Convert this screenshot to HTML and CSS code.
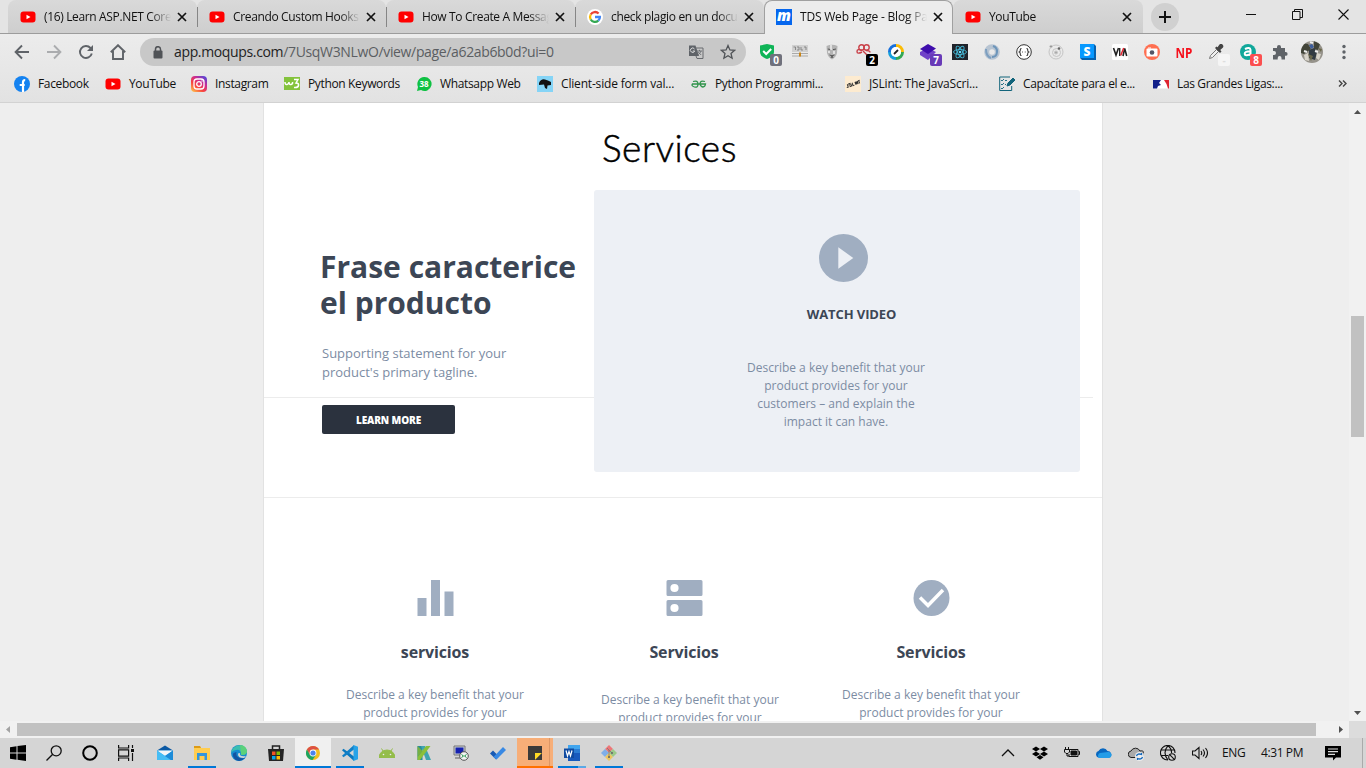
FILE: index.html
```html
<!DOCTYPE html>
<html lang="es">
<head>
<meta charset="utf-8">
<title>TDS Web Page - Blog Page</title>
<link rel="stylesheet" href="styles.css">
</head>
<body>
<svg class="defs" width="0" height="0">
  <symbol id="yt" viewBox="0 0 16 16"><rect x=".5" y="2.5" width="15" height="11" rx="3" fill="#f00"/><path d="M6.5 5.7v4.6L10.5 8z" fill="#fff"/></symbol>
  <symbol id="x" viewBox="0 0 10 10"><path d="M1 1l8 8M9 1L1 9" stroke="#111" stroke-width="1.7" fill="none"/></symbol>
</svg>

<div class="tabs">
  <div class="tab"><svg class="i16"><use href="#yt"/></svg><span class="tab-text">(16) Learn ASP.NET Core MVC</span><svg class="close"><use href="#x"/></svg></div>
  <div class="tab"><svg class="i16"><use href="#yt"/></svg><span class="tab-text">Creando Custom Hooks en</span><svg class="close"><use href="#x"/></svg></div>
  <div class="tab"><svg class="i16"><use href="#yt"/></svg><span class="tab-text">How To Create A Message</span><svg class="close"><use href="#x"/></svg></div>
  <div class="tab before"><svg class="i16" viewBox="0 0 16 16"><circle cx="8" cy="8" r="8" fill="#fff"/><g fill="none" stroke-width="2.3"><path d="M11.6 4.5A5 5 0 0 0 3.7 5.5" stroke="#ea4335"/><path d="M3.7 5.5a5 5 0 0 0 0 5" stroke="#fbbc05"/><path d="M3.7 10.5a5 5 0 0 0 7.6 1.2" stroke="#34a853"/><path d="M11.3 11.7A5 5 0 0 0 12.9 8H8" stroke="#4285f4"/></g></svg><span class="tab-text">check plagio en un documento</span><svg class="close"><use href="#x"/></svg></div>
  <div class="tab active"><svg class="i16" viewBox="0 0 16 16"><rect width="16" height="16" fill="#0667ee"/><text x="8" y="12" class="moq">m</text></svg><span class="tab-text">TDS Web Page - Blog Page</span><svg class="close"><use href="#x"/></svg></div>
  <div class="tab last"><svg class="i16"><use href="#yt"/></svg><span class="tab-text">YouTube</span><svg class="close"><use href="#x"/></svg></div>
  <div class="newtab"><svg width="12" height="12" viewBox="0 0 12 12"><path d="M6 0v12M0 6h12" stroke="#111" stroke-width="2"/></svg></div>
  <div class="win">
    <svg width="11" height="11" viewBox="0 0 11 11"><path d="M0 5.500h10" stroke="#111"/></svg>
    <svg width="11" height="11" viewBox="0 0 11 11"><path d="M.5 2.500h7.500v8H.5zM2.500 2.500v-2h8v8H8" stroke="#111" fill="none"/></svg>
    <svg width="11" height="11" viewBox="0 0 11 11"><path d="M.5.5l10 10M10.500.5l-10 10" stroke="#111" stroke-width="1.100"/></svg>
  </div>
</div>

<div class="toolbar">
  <div class="nav">
    <svg viewBox="0 0 16 16"><path d="M15 8H2M8 1.500L1.600 8 8 14.500" class="ns"/></svg>
    <svg viewBox="0 0 16 16" class="dim"><path d="M1 8h13M8 1.500L14.400 8 8 14.500" class="ns"/></svg>
    <svg viewBox="0 0 16 16"><path d="M13.800 9.500A6 6 0 1 1 12.500 4l1.500 2" class="ns"/><path d="M15 1v6H9z" fill="#5f6368"/></svg>
    <svg viewBox="0 0 16 16"><path d="M.8 8.200L8 1.200l7.200 7M3 7v8h10V7" class="ns"/></svg>
  </div>
  <div class="omni">
    <svg class="lock" viewBox="0 0 10 13"><rect x="0.500" y="4.500" width="9" height="8" rx="1" fill="#505357"/><path d="M2.500 5V3.200a2.500 2.500 0 0 1 5 0V5" fill="none" stroke="#505357" stroke-width="1.500"/></svg>
    <span class="url"><b>app.moqups.com</b>/7UsqW3NLwO/view/page/a62ab6b0d?ui=0</span>
    <svg class="i16" viewBox="0 0 16 16"><path d="M1 1.500h6.500L11 12H1z" fill="#5f6368"/><path d="M7.500 4H15v10.500H9L8 12" fill="none" stroke="#686b6f"/><path d="M6.500 5A2.200 2.200 0 1 0 6.700 7H4.800" stroke="#ddd" fill="none"/><path d="M9 7h5M11.500 5.800V7M13 7c-.5 2-2 3-2.800 3.600M10.200 8l3 3" stroke="#686b6f" fill="none" stroke-width=".9"/></svg>
    <svg class="i16 star" viewBox="0 0 16 16"><path d="M8 1.500l1.900 4.400 4.700.4-3.600 3.200 1.100 4.700L8 11.700l-4.100 2.500L5 9.500 1.400 6.300l4.700-.4z" fill="none" stroke="#505357" stroke-width="1.300"/></svg>
  </div>
  <div class="ext"><svg viewBox="0 0 16 16"><path d="M7 0l7 1.500v6c0 4-3 6-7 7.500C3 13.500 0 11.500 0 7.500v-6z" fill="#0fb457"/><path d="M3.200 7l3 3 5-5" fill="none" stroke="#fff" stroke-width="2"/></svg><i class="badge gray">0</i></div>
  <div class="ext"><svg viewBox="0 0 16 16"><rect y="1" width="16" height="7" fill="#d0d0d0"/><path d="M1.500 3h2v3M5 3h2v3H5M9 3v3h2M12 3h2v3" stroke="#777" fill="none" stroke-width=".8"/><path d="M0 9.500h16M0 12h16" stroke="#aaa"/><rect x="7" y="8.500" width="2" height="4" fill="#ca8618"/></svg></div>
  <div class="ext"><svg viewBox="0 0 16 16"><path d="M2.500 2Q8-.5 13.500 2L13 9q-1 4-5 6.500Q4 13 3 9z" fill="#b4b4b4"/><path d="M3.800 5l3 .6M9 5.600l3-.6M5.500 11q2.500 1.500 5 0M7 14l1-2 1 2" stroke="#555" fill="none"/><path d="M7 1v5M10 7v3M5 7v2" stroke="#eee" stroke-width="1.500"/></svg></div>
  <div class="ext"><svg viewBox="0 0 16 16" fill="none" stroke="#c94048" stroke-width="1.400"><circle cx="5.500" cy="3.500" r="2.700"/><circle cx="10.500" cy="3.500" r="2.700"/><path d="M6 6.200Q1 4.500 1 7.500t5 .5M7 7l6 6M10 6.500q4 0 4 2"/></svg><i class="badge black">2</i></div>
  <div class="ext"><svg viewBox="0 0 16 16" fill="none" stroke-width="3"><path d="M8 1.500A6.500 6.500 0 0 1 14.500 8" stroke="#fbbc05"/><path d="M14.500 8A6.500 6.500 0 0 1 8 14.500" stroke="#34a853"/><path d="M8 14.500A6.500 6.500 0 0 1 1.500 8" stroke="#169fdb"/><path d="M1.500 8A6.500 6.500 0 0 1 8 1.500" stroke="#1870dc"/><circle cx="8" cy="8" r="5" fill="#fff" stroke="none"/><path d="M6 10l4-4" stroke="#222" stroke-width="1.800"/></svg></div>
  <div class="ext"><svg viewBox="0 0 16 16"><path d="M8 4l8 4-8 8-8-5V8z" fill="#7042c8"/><path d="M8 0l8 4.500L8 10 0 5z" fill="#3e0dac"/></svg><i class="badge purple">7</i></div>
  <div class="ext"><svg viewBox="0 0 16 16"><rect width="16" height="16" fill="#20232a"/><g fill="none" stroke="#45b8d6" stroke-width=".9"><ellipse cx="8" cy="8" rx="6.500" ry="2.500"/><ellipse cx="8" cy="8" rx="6.500" ry="2.500" transform="rotate(60 8 8)"/><ellipse cx="8" cy="8" rx="6.500" ry="2.500" transform="rotate(120 8 8)"/></g><circle cx="8" cy="8" r="1.300" fill="#61dafb"/></svg></div>
  <div class="ext"><svg viewBox="0 0 16 16" fill="none"><circle cx="8" cy="8" r="5.300" stroke="#b7c4d2" stroke-width="5"/><path d="M9 2c6 2 5 11-1 11" stroke="#6d95ba" stroke-width="2"/><path d="M2 5c0 5 2 8 5 9" stroke="#7d9fc0" stroke-width="2"/></svg></div>
  <div class="ext"><svg viewBox="0 0 16 16" fill="none" stroke="#333"><circle cx="8" cy="8" r="7.300" fill="#fff"/><path d="M5.500 4.500q-1.300 0-1.200 1.500t-1 2q1.100.5 1 2t1.200 1.500M10.500 4.500q1.300 0 1.200 1.500t1 2q-1.100.5-1 2t-1.200 1.500M6.200 8h.8M8.800 8h.8" stroke-width="1.100"/></svg></div>
  <div class="ext"><svg viewBox="0 0 16 16" fill="none" stroke="#c5c5c5"><circle cx="8" cy="8" r="7"/><circle cx="8.500" cy="8.500" r="4"/><circle cx="8" cy="8.500" r="1.500" fill="#aaa"/><circle cx="3" cy="2.500" r="1.200" fill="#888"/><circle cx="11" cy="4.500" r="1.300" fill="#666" stroke="none"/></svg></div>
  <div class="ext"><svg viewBox="0 0 16 16"><path d="M0 0h14l2 2v14H2l-2-2z" fill="#0861ad"/><path d="M0 0h14v14H0z" fill="#0899ff"/><text x="7" y="11.500" class="s">S</text></svg></div>
  <div class="ext"><svg viewBox="0 0 16 16"><rect width="16" height="16" rx="1.500" fill="#fff"/><path d="M1.500 4L4 11 6.500 4M11 12l1.700-7.500L14.700 12" fill="none" stroke="#222" stroke-width="1.600"/><path d="M7.700 4v8" stroke="#222" stroke-width="1.400"/><path d="M8.700 11.500L11.700 4" stroke="#e2232e" stroke-width="1.500"/></svg></div>
  <div class="ext"><svg viewBox="0 0 16 16"><circle cx="8" cy="8" r="8" fill="#ff6f51"/><rect x="2.500" y="4.500" width="11" height="8" rx="1" fill="#fff"/><path d="M4 3.500h3v1H4z" fill="#fff"/><circle cx="8" cy="8.500" r="2.300" fill="#556"/></svg></div>
  <div class="ext np">NP</div>
  <div class="ext"><svg viewBox="0 0 16 16"><path d="M1.500 14.500l1-3 6-6 2 2-6 6z" fill="#eee" stroke="#777"/><path d="M7 4l5 5 1.500-1.500L12.200 6 15 3.500q1-1.500-.5-3t-3 0L9.500 3.300 8.400 2.500z" fill="#444"/></svg><i class="badge white">-</i></div>
  <div class="ext"><svg viewBox="0 0 16 16"><circle cx="8" cy="8" r="8" fill="#10a79a"/><path d="M5 5q5-2.500 5.500.8V12M10.500 7.300q-6 0-5.800 2.600t5.800.2" fill="none" stroke="#fff" stroke-width="2"/></svg><i class="badge red">8</i></div>
  <div class="ext"><svg viewBox="0 0 16 16"><path d="M1 4h4V3a2 2 0 0 1 4 0v1h4v4h.7a1.900 1.900 0 0 1 0 3.800H13v3.700H9.500V14a1.900 1.900 0 0 0-3.800 0v1.500H1V11h1a2 2 0 0 0 0-4H1z" fill="#5f6368"/></svg></div>
  <div class="ext"><svg class="avatar" viewBox="0 0 22 22"><clipPath id="av"><circle cx="11" cy="11" r="11"/></clipPath><g clip-path="url(#av)"><path d="M0 0h22v22H0z" fill="#96938b"/><path d="M0 2l7 1 3 5-7 5-3-1zM13 0l6 3-2 6-4-1z" fill="#414438"/><path d="M8 9l5-2 3 4-2 8-6-2z" fill="#323b42"/><path d="M8 4l3-1 2 3-3 2z" fill="#3c5d9b"/><path d="M3 14l4-2 1 8-4-1zM16 12l4 1-2 6-3-2z" fill="#d8d4ca"/><path d="M7 13l5 2-2 5zM17 7l4 1-1 3z" fill="#69664a"/><path d="M9 1l3 1M3 10l3 1M14 10l3 1" stroke="#eee" stroke-width="2"/></g></svg></div>
  <div class="ext"><svg viewBox="0 0 16 16" fill="#5f6368"><circle cx="8" cy="2.500" r="1.700"/><circle cx="8" cy="8" r="1.700"/><circle cx="8" cy="13.500" r="1.700"/></svg></div>
</div>

<div class="marks">
  <div class="mark"><svg class="i16" viewBox="0 0 16 16"><circle cx="8" cy="8" r="8" fill="#1482f0"/><path d="M9 16V6.200Q9 4 11.200 4.200M5.700 9h5" stroke="#fff" stroke-width="2.200" fill="none"/></svg>Facebook</div>
  <div class="mark"><svg class="i16"><use href="#yt"/></svg>YouTube</div>
  <div class="mark"><svg class="i16" viewBox="0 0 16 16"><defs><linearGradient id="ig" x1="0" y1="1" x2=".8" y2="0"><stop offset="0" stop-color="#ffd34e"/><stop offset=".4" stop-color="#f8433f"/><stop offset=".7" stop-color="#cc2b91"/><stop offset="1" stop-color="#5a45d4"/></linearGradient></defs><rect width="16" height="16" rx="4" fill="url(#ig)"/><rect x="3" y="3" width="10" height="10" rx="3" fill="none" stroke="#fff" stroke-width="1.300"/><circle cx="8" cy="8" r="2.300" fill="none" stroke="#fff" stroke-width="1.300"/><circle cx="11" cy="5" r=".7" fill="#fff"/></svg>Instagram</div>
  <div class="mark"><svg class="i16" viewBox="0 0 16 16"><path d="M0 1h16v13H0z" fill="#84c33c"/><path d="M1 6q0 3 2 2.500T5 6q0 3 2 2.500T8.500 6M10 3.500h4L12 7q3 0 2.500 2.500T10 11.500" fill="none" stroke="#fff" stroke-width="1.500"/></svg>Python Keywords</div>
  <div class="mark"><svg class="i16" viewBox="0 0 16 16"><path d="M8 1a7 7 0 1 1-3 13L1 15l1-4A7 7 0 0 1 8 1" fill="#0fc143"/><text x="8" y="11" class="wa">38</text></svg>Whatsapp Web</div>
  <div class="mark wide"><svg class="i16" viewBox="0 0 16 16"><path d="M0 0h16v16H0z" fill="#85d4f6"/><path d="M2 7Q4 2.500 8 3.500t6 2.500v3l-3.500.5L10 13l-2-1-1-3.500-5 .5z" fill="#111"/></svg>Client-side form val...</div>
  <div class="mark"><svg class="i16" viewBox="0 0 16 16"><path d="M2 5.500Q7 4 7 8t-3.500 3T1.500 8h13Q14 11 12 11T9 8q0-4 5-2.500" fill="none" stroke="#30944b" stroke-width="1.300"/></svg>Python Programmi...</div>
  <div class="mark wide"><svg class="i16" viewBox="0 0 16 16"><path d="M0 0h16v16H0z" fill="#fdebd0"/><g transform="rotate(-18 8 8)" stroke="#333" fill="none" stroke-width="1"><path d="M1 9.500h1.500V6.500M6 6.500H4V8h2v1.500H4M7.500 6.500v3H9M10.500 6.500v3M11.500 9.500v-3l1.500 3v-3M13.500 6.500h2M14.500 6.500v3"/></g></svg>JSLint: The JavaScri...</div>
  <div class="mark"><svg class="i16" viewBox="0 0 16 16" fill="none" stroke="#12647b"><path d="M11 1H.7v13.500h12V10"/><path d="M2 4l1 1 2-2M2 8l1 1 2-2M2 12l1 1 2-2M6 4.500h2M6 8.500h1" stroke-width=".9"/><path d="M8 10l1-3 5-5 2 2-5 5z" fill="#12647b"/></svg>Capacítate para el e...</div>
  <div class="mark"><svg class="i16" viewBox="0 0 16 16"><path d="M0 4h16v8.500H0z" fill="#fff"/><path d="M0 4h8L6 7l2 2-3 1-1 2.500H0z" fill="#12208a"/><path d="M11 4h5v8.500h-1L13.500 8z" fill="#df2330"/></svg>Las Grandes Ligas:...</div>
  <svg class="more" width="9" height="7" viewBox="0 0 9 7"><path d="M1 .5l3 3-3 3M5 .5l3 3-3 3" fill="none" stroke="#444" stroke-width="1.400"/></svg>
</div>

<div class="view">
  <div class="canvas">
    <div class="page">
      <section class="hero">
        <h1>Services</h1>
        <div class="pitch">
          <h2>Frase caracterice<br>el producto</h2>
          <p>Supporting statement for your<br>product's primary tagline.</p>
          <a class="btn">LEARN MORE</a>
        </div>
        <div class="video">
          <svg width="49" height="48" viewBox="0 0 49 48" preserveAspectRatio="none"><ellipse cx="24.500" cy="24" rx="24.500" ry="24" fill="#a0aec1"/><path d="M19.300 13.300v21.500L34.300 24z" fill="#edf0f5"/></svg>
          <h3>WATCH VIDEO</h3>
          <p>Describe a key benefit that your<br>product provides for your<br>customers – and explain the<br>impact it can have.</p>
        </div>
      </section>
      <section class="features">
        <div class="feature"><svg viewBox="0 0 36 36"><path d="M0 18h9v18H0zM13.500 0h9v36h-9zM27 11.500h9V36h-9z" fill="#a0aec1"/></svg><h4>servicios</h4><p>Describe a key benefit that your<br>product provides for your</p></div>
        <div class="feature mid"><svg viewBox="0 0 36 36"><path d="M1.500 0h33q1.500 0 1.500 1.500v13q0 1.500-1.500 1.500h-33Q0 16 0 14.500v-13Q0 0 1.500 0zM1.500 20h33q1.500 0 1.500 1.500v13q0 1.500-1.500 1.500h-33Q0 36 0 34.500v-13Q0 20 1.500 20z" fill="#a0aec1"/><circle cx="8" cy="8" r="4.100" fill="#fff"/><circle cx="8" cy="28" r="4.100" fill="#fff"/></svg><h4>Servicios</h4><p>Describe a key benefit that your<br>product provides for your</p></div>
        <div class="feature"><svg viewBox="0 0 36 36"><circle cx="18" cy="18" r="18" fill="#a0aec1"/><path d="M6.500 17.500l8 8L29.500 10" fill="none" stroke="#fff" stroke-width="3.500"/></svg><h4>Servicios</h4><p>Describe a key benefit that your<br>product provides for your</p></div>
      </section>
    </div>
  </div>
  <div class="vbar"><svg width="7" height="4"><path d="M0 4l3.500-4L7 4z" fill="#505050"/></svg><div class="vthumb"></div><svg width="7" height="4"><path d="M0 0l3.500 4L7 0z" fill="#505050"/></svg></div>
</div>
<div class="hbar"><svg width="4" height="7"><path d="M4 0L0 3.500 4 7z" fill="#a3a3a3"/></svg><div class="hthumb"></div><svg width="4" height="7"><path d="M0 0l4 3.500L0 7z" fill="#505050"/></svg></div>

<div class="taskbar">
  <div class="sys"><svg viewBox="0 0 16 16"><path d="M0 2.300L6.500 1.300v6.200H0zM7.500 1.100L16 0v7.500H7.500zM0 8.500h6.500v6.200L0 13.700zM7.500 8.500H16V16l-8.500-1.200z"/></svg></div>
  <div class="sys"><svg viewBox="0 0 16 16" fill="none" stroke="#111" stroke-width="1.300"><circle cx="10.200" cy="5.800" r="5"/><path d="M6.700 9.300L.5 15.500"/></svg></div>
  <div class="sys"><svg viewBox="0 0 16 16"><circle cx="8" cy="8" r="6.800" fill="none" stroke="#000" stroke-width="2"/></svg></div>
  <div class="sys"><svg viewBox="0 0 16 16" fill="none" stroke="#111" stroke-width="1.200"><path d="M.6 0v3h10V0M.6 4.800h10v6.400H.6zM.6 16v-3h10v3M14.500 0v3M14.500 8v8"/><path d="M13 4h3v3h-3z" fill="#111" stroke="none"/></svg></div>
  <div class="apps">
    <div class="app"><svg viewBox="0 0 16 16"><path d="M0 5.500L8 .5l8 5v9.500H0z" fill="#0c59a4"/><path d="M0 5.500h16V15H0z" fill="#2aa8ed"/><path d="M0 5.500h16L8 11z" fill="#f4f6f8"/><path d="M0 5.500L14 15H0z" fill="#45bdf5"/><path d="M16 5.500V15h-2L8 11z" fill="#1c8bd8"/></svg></div>
    <div class="app run"><svg viewBox="0 0 16 16"><path d="M0 1h6l1 2h9v12H0z" fill="#ffcd50"/><path d="M0 1h6l1 2H0z" fill="#dc9a16"/><path d="M3 15V8h10v7h-2.500v-4h-5v4z" fill="#3295db"/></svg></div>
    <div class="app"><svg viewBox="0 0 16 16"><circle cx="8" cy="8" r="8" fill="#168bd0"/><path d="M1 5C4-1 14-2 16 6q0 4-5 4-2-.5-1-2Q9 4 5 5 2 5 0 8z" fill="#3bbfb0"/><path d="M9 .2Q15 0 16 6q0 4-5 4-1.500-.5-1-2z" fill="#5bd17a"/><path d="M5.500 7Q4 14 14 13q-5 5-10 1.500Q-1 8 5.500 7" fill="#1354a3"/><path d="M9 8q-1 4 6 3l-2 2Q6.500 13 7 8.500z" fill="#d5d5d5"/></svg></div>
    <div class="app"><svg viewBox="0 0 16 16"><path d="M4.500 4V1h7v3" fill="none" stroke="#222" stroke-width="1.500"/><path d="M0 4h16l-1 12H1z" fill="#242424"/><path d="M4 6.500h3.500V10H4z" fill="#f35325"/><path d="M8.500 6.500H12V10H8.500z" fill="#81bc06"/><path d="M4 11h3.500v3.500H4z" fill="#05a6f0"/><path d="M8.500 11H12v3.500H8.500z" fill="#ffba08"/></svg></div>
    <div class="app run chrome"><svg viewBox="0 0 16 16"><circle cx="8" cy="8" r="7" fill="#f2bf20"/><path d="M1.900 4.500A7 7 0 0 1 14.100 4.500H8L5 10z" fill="#dd5144"/><path d="M1.900 4.500A7 7 0 0 0 7.500 15l3.500-5H5z" fill="#1da462"/><circle cx="8" cy="8" r="3.400" fill="#fff"/><circle cx="8" cy="8" r="2.600" fill="#4b83ed"/></svg></div>
    <div class="app run"><svg viewBox="0 0 16 16"><path d="M0 5.200l1.500-1.400L12 11.500V16z" fill="#0a78be"/><path d="M0 10.800l1.500 1.400L12 4.500V0z" fill="#1180c8"/><path d="M11.500 0L16 1.800v12.400L11.500 16z" fill="#27a3e8"/></svg></div>
    <div class="app"><svg viewBox="0 0 16 16"><path d="M0 12.500a8 7.500 0 0 1 16 0zM4 6L2.500 3.500M12 6l1.500-2.500" fill="#94bd4a" stroke="#94bd4a"/><circle cx="4.500" cy="9.500" r=".8" fill="#eee"/><circle cx="11.500" cy="9.500" r=".8" fill="#eee"/></svg></div>
    <div class="app"><svg viewBox="0 0 16 16"><path d="M1.500 1h5v14h-5z" fill="#288c9b"/><path d="M5 1h4l6 14h-5z" fill="#40a4b0"/><path d="M10 1h4.500L4 15H1.500V12z" fill="#8cc03a"/><path d="M1.500 1l5 5-5 6z" fill="#76b043"/></svg></div>
    <div class="app"><svg viewBox="0 0 16 16"><path d="M1 1h11v9H1z" fill="#c9cfd4" stroke="#777"/><path d="M2.500 2.500h8v6h-8z" fill="#1521b0"/><path d="M2 12h8v2H2z" fill="#999"/><circle cx="11" cy="11" r="4.300" fill="#f4f4f4" stroke="#555"/><path d="M8.500 9.500l2 1.500-2 1.500M13.500 9.500l-2 1.500 2 1.500" stroke="#169343" fill="none"/></svg></div>
    <div class="app"><svg viewBox="0 0 16 16"><path d="M0 8.500L3 5.500l6 6-3 3z" fill="#185ab4"/><path d="M3.500 12L13 2l3 3-9.500 9.500z" fill="#3889e4"/></svg></div>
    <div class="app note"><svg viewBox="0 0 16 16"><path d="M1 1h14v7l-7 7H1z" fill="#3b3a39"/><path d="M8 8h7l-7 7z" fill="#ffda24"/><path d="M15 8v7H8z" fill="#3b3a39"/></svg></div>
    <div class="app run word"><svg viewBox="0 0 16 16"><path d="M4 0h12v16H4z" fill="#185abd"/><path d="M4 0h12v4H4z" fill="#41a5ee"/><path d="M4 4h12v4H4z" fill="#2b7cd3"/><path d="M0 3.500h10v9.500H0z" fill="#104ba0"/><path d="M2 5.500L3.500 11 5 6.500 6.500 11 8 5.500" fill="none" stroke="#fff" stroke-width="1.200"/></svg></div>
    <div class="app run"><svg viewBox="0 0 16 16"><path d="M8 0l4 4-4 4-4-4z" fill="#ed7678"/><path d="M4 4l4 4-4 4-4-4z" fill="#7faee8"/><path d="M12 4l4 4-4 4-4-4z" fill="#9ac989"/><path d="M8 8l4 4-4 4-4-4z" fill="#edc65f"/><path d="M6 3l5 5M8 5v8" stroke="#777" stroke-width=".8"/><circle cx="11" cy="8" r="1" fill="#666"/><circle cx="8" cy="12" r="1" fill="#666"/></svg></div>
  </div>
  <div class="tray">
    <div><svg viewBox="0 0 16 16"><path d="M2 11l6-6 6 6" fill="none" stroke="#111" stroke-width="1.300"/></svg></div>
    <div><svg viewBox="0 0 16 16"><path d="M4 1.500L8 4 4 6.500 0 4zM12 1.500L16 4l-4 2.500L8 4zM4 6.500L8 9l-4 2.500L0 9zM12 6.500L16 9l-4 2.500L8 9zM4.500 12.300L8 10l3.500 2.300L8 14.800z"/></svg></div>
    <div><svg viewBox="0 0 16 16" fill="none" stroke="#111"><path d="M5.500 4.500H14v7H5V9M14.500 6.500h1v3h-1M1.500 2v2M4.500 2v2M.5 4.500h5V7L4 8.500H2L.5 7zM3 8.500V11h2"/><path d="M7 6h5.500v4H7z" fill="#111"/></svg></div>
    <div><svg viewBox="0 0 16 16"><path d="M2 12.500a3.500 3.500 0 0 1 .5-6.500A5 5 0 0 1 11.500 6 3.700 3.700 0 0 1 14 12.500z" fill="#0867c0"/><path d="M3 13a3 3 0 0 1 1-5l4-.5 4-.5a3 3 0 0 1 1 6z" fill="#239ce7"/></svg></div>
    <div><svg viewBox="0 0 16 16"><path d="M3 12.500a3.300 3.300 0 0 1 0-6.500A5 5 0 0 1 12 6a3.300 3.300 0 0 1 2 6.500z" fill="#aaa" stroke="#222"/><circle cx="11.500" cy="11.500" r="4.500" fill="#eee"/><path d="M8.500 11q1-3 5-1.500V8M14.500 12q-1 3-5 1.500V15" fill="none" stroke="#1268bd" stroke-width="1.300"/></svg></div>
    <div><svg viewBox="0 0 16 16" fill="none" stroke="#111" stroke-width="1.100"><path d="M8 15A7.300 7.300 0 1 1 15 8M8 .7q-6 7 0 14.300M8 .7q4 3.500 3.500 7.300M1 5h14M1 10.500h7"/><circle cx="12" cy="12" r="3.300"/><path d="M9.700 9.700l4.600 4.600"/></svg></div>
    <div><svg viewBox="0 0 16 16" fill="none" stroke="#111" stroke-width="1.100"><path d="M.5 6v4h2.500l4 3.500v-11L3 6zM9 6q1.500 2 0 4M11 4.500q3 3.500 0 7M13.500 3q4 5 0 10"/></svg></div>
    <span class="lang">ENG</span><span class="time">4:31 PM</span>
    <svg class="notif" viewBox="0 0 16 16"><path d="M0 1h16v11.500h-5L8 15.500V12.500H0z"/><path d="M3 4h10M3 6.700h10M3 9.400h7" stroke="#ddd" stroke-width="1.200"/></svg>
  </div>
</div>
</body>
</html>
```
FILE: styles.css
```css
* { box-sizing: border-box; }
body { margin: 0; width: 1366px; height: 768px; overflow: hidden; font-family: "Open Sans", sans-serif; font-size: 12px; color: #111; background: #e4e4e4; display: flex; flex-direction: column; }
h1, h2, h3, h4, p { margin: 0; }
svg { display: block; flex: none; }
.defs { position: absolute; }
.i16 { width: 16px; height: 16px; }

/* tab strip */
.tabs { height: 34px; padding-left: 8px; display: flex; background: #e4e4e4; border-bottom: 1px solid #9c9c9c; flex: none; }
.tab { position: relative; width: 189px; height: 33px; padding-left: 12px; display: flex; align-items: center; background: linear-gradient(#d9d9d9, #cecece); border-radius: 8px 8px 0 0; }
.tab::after { content: ""; position: absolute; right: -1px; top: 7px; width: 1px; height: 20px; background: #868686; z-index: 1; }
.tab-text { margin-left: 8px; width: 127px; height: 20px; line-height: 20px; overflow: hidden; white-space: nowrap; font-size: 12px; letter-spacing: -.35px; -webkit-mask-image: linear-gradient(90deg, #000 84%, transparent); mask-image: linear-gradient(90deg, #000 84%, transparent); }
.close { width: 10px; height: 10px; margin-left: 6px; }
.tab.active { height: 34px; background: #ececec; border: 1px solid #a0a0a0; border-bottom: 0; padding: 0 0 2px 11px; z-index: 1; }
.tab.active .tab-text { letter-spacing: -.2px; }
.tab.active::after, .tab.before::after, .tab.last::after { display: none; }
.tab.last { width: 190px; }
.moq { font: italic 800 15px "Open Sans", sans-serif; fill: #fff; text-anchor: middle; }
.newtab { width: 28px; height: 28px; margin: 3px 0 0 8px; border-radius: 50%; background: #d0d0d0; display: flex; align-items: center; justify-content: center; }
.win { display: flex; gap: 35px; margin: 9px 0 0 67px; }

/* toolbar */
.toolbar { height: 36px; display: flex; align-items: center; background: linear-gradient(#ececec, #e7e7e7); flex: none; }
.nav { width: 140px; padding-left: 14px; display: flex; gap: 16px; }
.nav svg { width: 16px; height: 16px; }
.ns { fill: none; stroke: #5f6368; stroke-width: 1.9; }
.dim { opacity: .45; }
.omni { width: 606px; height: 28px; margin-right: 6px; padding-left: 13px; border-radius: 14px; background: #c8c8c8; display: flex; align-items: center; }
.lock { width: 10px; height: 13px; }
.url { margin-left: 11px; width: 514px; font-size: 14px; letter-spacing: -.35px; line-height: 18px; padding-bottom: 1px; color: #5b5e62; white-space: nowrap; }
.url b { font-weight: 400; color: #222; }
.star { margin-left: 16px; }
.ext { position: relative; width: 32px; height: 32px; display: flex; align-items: center; justify-content: center; }
.ext svg { width: 16px; height: 16px; }
.ext .avatar { width: 22px; height: 22px; }
.badge { position: absolute; right: 2px; bottom: 2px; width: 12px; height: 12px; border-radius: 2px; font: bold 10px/12px "Open Sans", sans-serif; text-align: center; color: #fff; }
.gray { background: #70717c; }
.black { background: #000; }
.purple { background: #683ab7; }
.white { background: #f5f5f5; color: #ddd; }
.red { background: #fb4f4f; }
.s { font: 800 12px "Open Sans", sans-serif; fill: #fff; text-anchor: middle; }
.np { font: bold 15px "Open Sans", sans-serif; color: #f5101c; transform: scaleX(.78); }

/* bookmarks */
.marks { height: 33px; padding: 0 19px 5px 14px; display: grid; grid-template-columns: 91px 86px 93px 132px 121px 154px 154px 154px 154px 185px 9px; align-items: center; background: linear-gradient(#e7e7e7, #e2e2e2); border-bottom: 1px solid #d2d2d2; flex: none; }
.mark { display: flex; align-items: center; gap: 8px; white-space: nowrap; font-size: 12px; letter-spacing: -.35px; }
.wide { letter-spacing: -.18px; }
.wa { font: bold 8px "Open Sans", sans-serif; fill: #fff; text-anchor: middle; letter-spacing: 0; }

/* scrolling document */
.view { height: 618px; display: flex; flex: none; }
.canvas { width: 1349px; height: 618px; padding-left: 263px; background: #eee; overflow: hidden; }
.page { width: 840px; height: 640px; background: #fff; border-left: 1px solid #e2e2e2; border-right: 1px solid #e2e2e2; }
.hero { height: 395px; display: grid; grid-template-columns: 330px 486px; grid-template-rows: 87px 282px; border-bottom: 1px solid #ececec; background: linear-gradient(#ececec, #ececec) 0 294px / 829px 1px no-repeat; }
.hero h1 { grid-column: 2; padding: 20px 0 0 8px; font: 300 37px/50px "Lato", sans-serif; letter-spacing: .5px; color: #000; -webkit-text-stroke: .5px #000; }
.pitch { grid-column: 1; padding: 59px 0 0 56px; }
.pitch h2 { font-size: 30px; line-height: 36px; font-weight: 700; color: #3c4655; white-space: nowrap; }
.pitch p { margin: 23px 0 0 2px; font-size: 13px; line-height: 19px; color: #7c8ca3; }
.btn { display: block; width: 133px; height: 29px; margin: 23px 0 0 2px; border-radius: 2px; background: #2b323e; color: #fff; font-size: 10px; font-weight: 800; line-height: 31px; letter-spacing: -.1px; text-align: center; }
.video { background: #edf0f5; border-radius: 3px; padding-top: 44px; }
.video svg { margin-left: 225px; }
.video h3 { margin: 22px 0 0 29px; text-align: center; font-size: 13px; line-height: 20px; font-weight: 700; letter-spacing: -.1px; color: #3c4655; }
.video p { margin-top: 35px; padding-right: 2px; }
.video p, .feature p { text-align: center; font-size: 12px; line-height: 18px; color: #7c8ca3; }
.features { padding: 82px 0 0 47px; display: grid; grid-template-columns: 248px 248px 248px; }
.feature svg { width: 37px; height: 36px; margin: 0 auto; }
.feature h4 { margin-top: 24px; text-align: center; font-size: 16px; line-height: 24px; font-weight: 700; letter-spacing: -.15px; color: #3c4655; }
.feature p { margin-top: 22px; }
.mid { padding-left: 2px; }
.mid p { margin-top: 27px; padding-left: 12px; }
.vbar { width: 17px; padding: 7px 0 6px; background: #f1f1f1; display: flex; flex-direction: column; align-items: center; }
.vthumb { width: 13px; height: 121px; margin: 202px 0 auto; background: #c1c1c1; }
.hbar { height: 17px; padding: 0 23px 0 6px; background: linear-gradient(90deg, #f1f1f1 1349px, #dcdcdc 1349px); display: flex; align-items: center; flex: none; }
.hthumb { width: 1299px; height: 13px; margin: 0 auto 0 7px; background: #c1c1c1; }

/* taskbar */
.taskbar { height: 30px; display: flex; background: #d5d5d5; flex: none; }
.sys { width: 36px; display: flex; align-items: center; justify-content: center; }
.sys svg, .app svg, .tray div svg { width: 16px; height: 16px; }
.apps { display: flex; margin-left: 3px; }
.app { position: relative; width: 37px; padding-right: 1px; display: flex; align-items: center; justify-content: center; }
.run::after { content: ""; position: absolute; left: 4px; right: 5px; bottom: 0; height: 2px; background: #0078d7; }
.chrome { background: linear-gradient(90deg, #f0f0f0 36px, transparent 36px); }
.chrome::after { left: 0; right: 1px; }
.word::after { background: linear-gradient(90deg, #0078d7 20px, #5ba9e6 20px); }
.note { background: linear-gradient(90deg, #f7ae78 32px, #dd9766 32px, #dd9766 33px, #f7ae78 33px, #f7ae78 36px, transparent 36px); }
.note::after { content: ""; position: absolute; left: 0; right: 1px; bottom: 0; height: 2px; background: #ff7000; }
.tray { margin-left: 364px; display: flex; align-items: center; border-right: 1px solid #aaa; width: 371px; }
.tray div { width: 32px; display: flex; justify-content: center; }
.lang { width: 39px; padding: 0 0 2px 6px; letter-spacing: -.4px; }
.time { width: 70px; padding: 0 0 2px 6px; letter-spacing: -.4px; white-space: nowrap; }
.notif { width: 16px; height: 16px; }
```
